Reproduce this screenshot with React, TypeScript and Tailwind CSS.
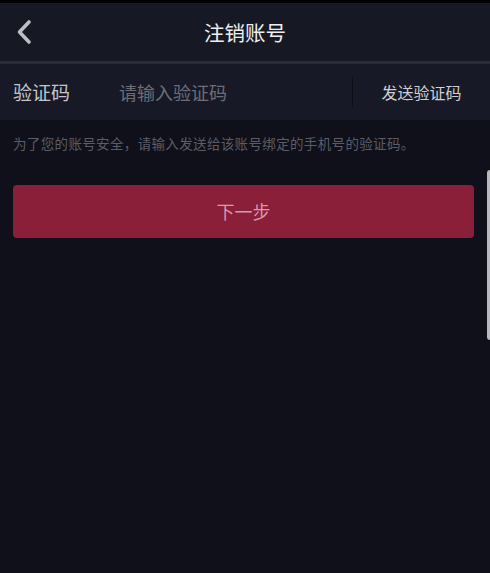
export default function App() {
  return (
    <div
      className="relative h-[573px] w-[490px] overflow-hidden bg-[#0f1019]"
      style={{ fontFamily: '"Noto Sans CJK SC", "Noto Sans", sans-serif' }}
    >
      <div className="h-[3px] bg-black" />

      <header className="relative flex h-[58px] items-center justify-center bg-[#161923]">
        <button className="absolute left-0 top-0 h-full w-[50px] text-[#bcbdc3]">
          <svg width="50" height="58" viewBox="0 0 50 58" fill="none">
            <polyline
              points="29,19 19.5,29 29,39"
              stroke="currentColor"
              strokeWidth="3.6"
              strokeLinecap="round"
              strokeLinejoin="round"
            />
          </svg>
        </button>
        <h1 className="text-[20.5px] leading-none text-[#eeeef1]">注销账号</h1>
      </header>
      <div className="h-[3px] bg-[#2a2d37]" />

      <div className="flex h-[56px] items-center bg-[#171a26]">
        <span className="ml-[13px] w-[106px] text-[19px] text-[#c4c5ca]">验证码</span>
        <input
          className="min-w-0 flex-1 bg-transparent text-[18px] text-[#c4c5ca] outline-none placeholder:text-[#6b6d76]"
          placeholder="请输入验证码"
        />
        <div className="h-[30px] w-px bg-[#0c0e15]" />
        <button className="w-[137px] text-center text-[16px] text-[#cfd0d4]">发送验证码</button>
      </div>

      <p className="ml-[13px] mt-[14px] text-[13.5px] leading-[18px] tracking-[0.35px] text-[#5a5d67]">
        为了您的账号安全，请输入发送给该账号绑定的手机号的验证码。
      </p>

      <div className="px-[13px] pt-[33px] pr-[16px]">
        <button className="flex h-[53px] w-full items-center justify-center rounded-[4px] bg-[#8a1f3a] text-[18px] text-[#d69aa9]">
          下一步
        </button>
      </div>

      <div className="absolute right-0 top-[170px] h-[170px] w-[3px] rounded-l-[3px] bg-[#b9babd]" />
    </div>
  );
}
